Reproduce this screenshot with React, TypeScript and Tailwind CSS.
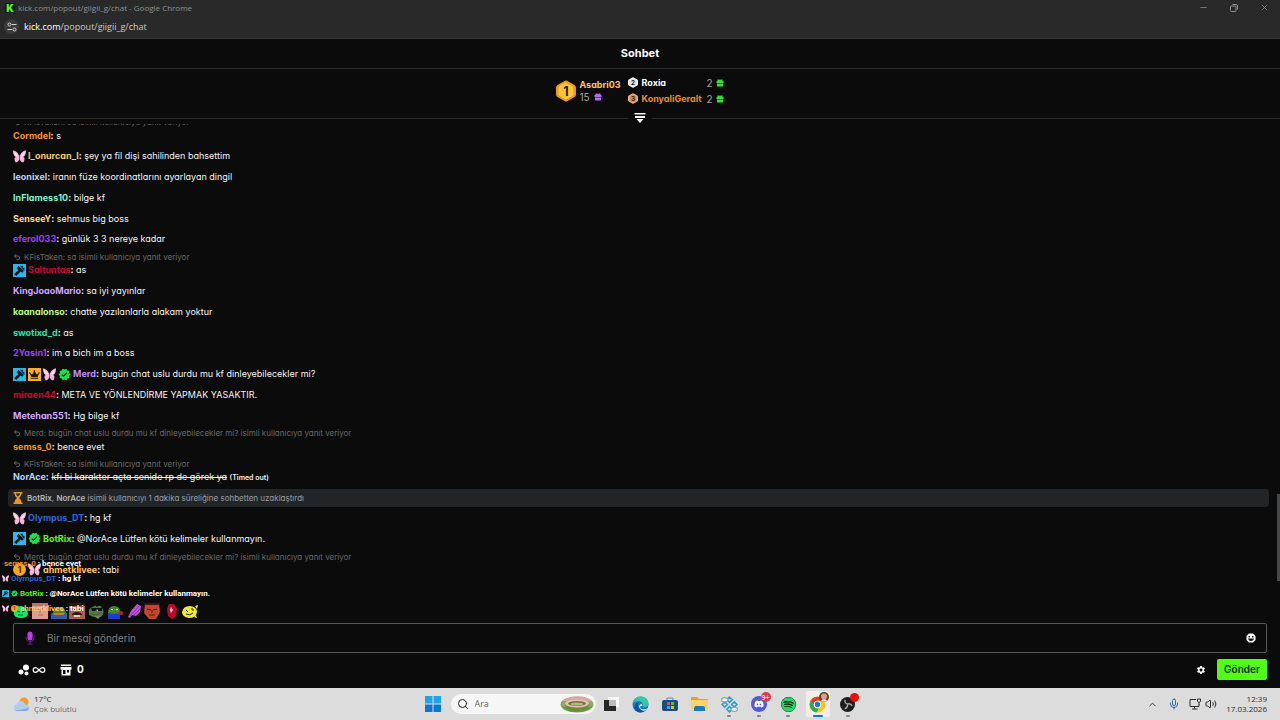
import type { ReactNode } from 'react';
import { ChevronUp, Infinity as InfinityIcon, Mic, Minus, Search, Undo2, Volume2, X } from 'lucide-react';
import { FaCrown, FaDiscord, FaSpotify } from 'react-icons/fa';
import { MdSettings, MdVerified } from 'react-icons/md';

type Badge = 'mod' | 'vip' | 'butterfly' | 'verified' | 'coin';

type Message = {
  user: string;
  color: string;
  text: string;
  badges?: Badge[];
  reply?: string;
  timedOut?: boolean;
  notice?: boolean;
};

const SA_REPLY = 'KFisTaken: sa isimli kullanıcıya yanıt veriyor';
const MERD_REPLY = 'Merd: bugün chat uslu durdu mu kf dinleyebilecekler mi? isimli kullanıcıya yanıt veriyor';

const messages: Message[] = [
  { user: 'Cormdel', color: 'text-[#f2941f]', text: 's', reply: SA_REPLY },
  { user: 'l_onurcan_l', color: 'text-[#ffc466]', text: 'şey ya fil dişi sahilinden bahsettim', badges: ['butterfly'] },
  { user: 'leonixel', color: 'text-[#b5d2fa]', text: 'iranın füze koordinatlarını ayarlayan dingil' },
  { user: 'InFlamess10', color: 'text-[#7df5d0]', text: 'bilge kf' },
  { user: 'SenseeY', color: 'text-[#ffd899]', text: 'sehmus big boss' },
  { user: 'eferol033', color: 'text-[#9146f0]', text: 'günlük 3 3 nereye kadar' },
  { user: 'Saltuntas', color: 'text-[#c40a34]', text: 'as', badges: ['mod'], reply: SA_REPLY },
  { user: 'KingJoaoMario', color: 'text-[#cfa5ff]', text: 'sa iyi yayınlar' },
  { user: 'kaanalonso', color: 'text-[#b4fb8e]', text: 'chatte yazılanlarla alakam yoktur' },
  { user: 'swotixd_d', color: 'text-[#2fe0a5]', text: 'as' },
  { user: '2Yasin1', color: 'text-[#9146f0]', text: 'im a bich im a boss' },
  { user: 'Merd', color: 'text-[#bd8cff]', text: 'bugün chat uslu durdu mu kf dinleyebilecekler mi?', badges: ['mod', 'vip', 'butterfly', 'verified'] },
  { user: 'miraen44', color: 'text-[#c40a34]', text: 'META VE YÖNLENDİRME YAPMAK YASAKTIR.' },
  { user: 'Metehan551', color: 'text-[#d2a6ff]', text: 'Hg bilge kf' },
  { user: 'semss_0', color: 'text-[#f2941f]', text: 'bence evet', reply: MERD_REPLY },
  { user: 'NorAce', color: 'text-[#b5d2fa]', text: 'kfı bi karakter açta senide rp de görek ya', reply: SA_REPLY, timedOut: true },
  { user: 'BotRix', color: '', text: '', notice: true },
  { user: 'Olympus_DT', color: 'text-[#2a68d8]', text: 'hg kf', badges: ['butterfly'] },
  { user: 'BotRix', color: 'text-[#53fc18]', text: '@NorAce Lütfen kötü kelimeler kullanmayın.', badges: ['mod', 'verified'] },
  { user: 'ahmetklivee', color: 'text-[#ffc466]', text: 'tabi', badges: ['coin', 'butterfly'], reply: MERD_REPLY },
];

const overlayMessages: Message[] = [
  { user: 'semss_0', color: 'text-[#f2941f]', text: 'bence evet' },
  { user: 'Olympus_DT', color: 'text-[#2a68d8]', text: 'hg kf', badges: ['butterfly'] },
  { user: 'BotRix', color: 'text-[#53fc18]', text: '@NorAce Lütfen kötü kelimeler kullanmayın.', badges: ['mod', 'verified'] },
  { user: 'ahmetklivee', color: 'text-[#ffc466]', text: 'tabi', badges: ['butterfly', 'coin'] },
];

function Butterfly({ className }: { className: string }) {
  return (
    <svg viewBox="0 0 24 24" className={className}>
      <path d="M12 13C10 5 5 1 0 1c0 5 1 10 5 12-3 1-3 6 0 10 4 0 7-4 7-9z" fill="#f7b6dc" />
      <path d="M12 13c2-8 7-12 12-12 0 5-1 10-5 12 3 1 3 6 0 10-4 0-7-4-7-9z" fill="#f7b6dc" />
      <path d="M9 11C7 7 5 5 2 4c1 4 2 6 5 8zM15 11c2-4 4-6 7-7-1 4-2 6-5 8z" fill="#fde8f5" />
      <path d="M12 9v10" stroke="#7c4a6b" strokeWidth="1" />
    </svg>
  );
}

function Gift({ className }: { className: string }) {
  return (
    <svg viewBox="0 0 16 16" className={className} fill="currentColor">
      <path d="M3 1h4l1 2 1-2h4v3h2v4H1V4h2zM2 9h12v6H2z" />
    </svg>
  );
}

function BadgeIcon({ kind, small }: { kind: Badge; small?: boolean }) {
  const size = small ? 'size-[7px] shrink-0' : 'size-[13px] shrink-0';
  if (kind === 'mod') {
    return (
      <svg viewBox="0 0 24 24" className={size}>
        <path d="M0 0h24v24H0z" fill="#2cb8ea" />
        <path d="M10 3l10 10-3 3-3-2-8 8-4-3 8-8-3-3z" fill="#07141b" />
        <path d="M13 3h5v4h3v6z" fill="#07141b" />
      </svg>
    );
  }
  if (kind === 'vip') {
    return <span className={`${size} flex items-center justify-center bg-[#fdb022] text-[#231500]`}><FaCrown className="size-5/6" /></span>;
  }
  if (kind === 'verified') return <MdVerified className={`${size} text-[#1fe04a]`} />;
  if (kind === 'butterfly') return <Butterfly className={size} />;
  return (
    <svg viewBox="0 0 24 24" className={size}>
      <circle cx="12" cy="12" r="12" fill="#f5a623" />
      <text x="12" y="18" textAnchor="middle" fontSize="17" fontWeight="700" fill="#5c3300">1</text>
    </svg>
  );
}

function Notice() {
  return (
    <li className="my-px flex h-[18px] shrink-0 items-center rounded-sm bg-[#222426] px-[5px] text-[8px] text-[#9a9ea3]">
      <svg viewBox="0 0 20 24" className="mr-1 h-3 w-[10px] shrink-0" fill="#e8952a">
        <path d="M1 0h18v3h-2c0 4-2 6-5 9 3 3 5 5 5 9h2v3H1v-3h2c0-4 2-6 5-9-3-3-5-5-5-9H1z" />
        <path d="M6 3h8c0 2-1 3-4 6-3-3-4-4-4-6z" fill="#222426" />
      </svg>
      <span className="whitespace-pre">
        <b className="font-semibold text-[#b4b7bb]">BotRix</b>, <b className="font-semibold text-[#b4b7bb]">NorAce</b> isimli kullanıcıyı 1 dakika süreliğine sohbetten uzaklaştırdı
      </span>
    </li>
  );
}

function ChatRow({ m }: { m: Message }) {
  if (m.notice) return <Notice />;
  return (
    <li className={`flex shrink-0 grow flex-col justify-center px-[5px] ${m.reply ? 'max-h-[31px] basis-[30px]' : 'max-h-[21px] basis-5'}`}>
      {m.reply && (
        <div className="flex h-[10px] items-center gap-[3px] pt-1 text-[#686868]">
          <Undo2 className="size-2 shrink-0" strokeWidth={3} />
          <span className="whitespace-nowrap text-[8px]">{m.reply}</span>
        </div>
      )}
      <div className="flex h-5 items-center gap-[2px]">
        {m.badges?.map((b) => <BadgeIcon key={b} kind={b} />)}
        <p className="whitespace-nowrap">
          <button className={`font-bold ${m.color}`}>{m.user}</button>
          <b>:</b>{' '}
          {m.timedOut ? <><s>{m.text}</s> <span className="text-[7px] font-semibold">(Timed out)</span></> : m.text}
        </p>
      </div>
    </li>
  );
}

function Hexagon({ n, fill, edge, className }: { n: string; fill: string; edge: string; className: string }) {
  return (
    <svg viewBox="0 0 40 44" className={className}>
      <path d="M17 2q3-2 6 0l14 8q3 2 3 5v14q0 3-3 5l-14 8q-3 2-6 0L3 34q-3-2-3-5V15q0-3 3-5z" fill={edge} />
      <path d="M18 6q2-1 4 0l11 6q2 2 2 4v12q0 2-2 4l-11 6q-2 1-4 0L7 32q-2-2-2-4V16q0-2 2-4z" fill={fill} />
      <text x="20" y="31" textAnchor="middle" fontSize="25" fontWeight="700" fill="#2a1a05">{n}</text>
    </svg>
  );
}

function Leaderboard() {
  return (
    <section className="relative flex h-[50px] shrink-0 items-center justify-center gap-[7px] border-b border-[#2b2b2b] pb-[6px] text-[10px]">
      <div className="flex items-center gap-[3px]">
        <Hexagon n="1" fill="#f8c53c" edge="#e89a1c" className="h-[22px] w-5" />
        <div className="leading-[13px]">
          <div className="text-[9px] font-bold text-[#ffc466]">Asabri03</div>
          <div className="flex items-center gap-1 text-[#a5a5a5]">15 <Gift className="size-2 text-[#b86af0]" /></div>
        </div>
      </div>
      <ul className="leading-4">
        <li className="flex items-center">
          <Hexagon n="2" fill="#dfe3e6" edge="#f5f5f5" className="mr-1 h-[11px] w-[10px]" />
          <span className="w-[65px] text-[9px] font-bold text-white">Roxia</span>
          <span className="w-[9px] text-[#a5a5a5]">2</span>
          <Gift className="size-2 text-[#2ee62e]" />
        </li>
        <li className="flex items-center">
          <Hexagon n="3" fill="#d98d5c" edge="#f0b48c" className="mr-1 h-[11px] w-[10px]" />
          <span className="w-[65px] text-[9px] font-bold text-[#e88a32]">KonyaliGeralt</span>
          <span className="w-[9px] text-[#a5a5a5]">2</span>
          <Gift className="size-2 text-[#2ee62e]" />
        </li>
      </ul>
      <button aria-label="Liderlik tablosu" className="absolute -bottom-[6px] left-1/2 -translate-x-1/2 bg-[#0b0b0b] px-[6px]">
        <svg viewBox="0 0 24 24" className="size-3" fill="#ffffff">
          <path d="M1 2h22v3H1zM2 8h20v4H2zM5 14h14l-7 8z" />
        </svg>
      </button>
    </section>
  );
}

function Emote({ label, children }: { label: string; children: ReactNode }) {
  return (
    <button aria-label={label} className="size-4">
      <svg viewBox="0 0 16 16" className="size-4">{children}</svg>
    </button>
  );
}

function FrogFace({ skin }: { skin: string }) {
  return (
    <>
      <path d="M1 10q-1-5 4-6 2-3 4 0 3-3 5 1 3 4 0 8-6 3-13-1z" fill={skin} />
      <path d="M4 6h3v2H4zM9 6h4v2H9z" fill="#e9efe0" />
      <path d="M5 6h2v2H5zM11 6h2v2h-2z" fill="#101810" />
      <path d="M3 11q5 2 10-1" stroke="#7c3f27" fill="none" />
    </>
  );
}

function QuickEmotes() {
  return (
    <div className="flex w-[185px] justify-between">
      <Emote label="slime">
        <path d="M1 9q1-6 7-6 6 1 7 7 0 5-7 5-8 0-7-6z" fill="#12e86a" />
        <path d="M4 8l3 1M9 9l3-1M5 12h5" stroke="#07602c" />
        <path d="M3 4l2-2 1 3z" fill="#12e86a" />
      </Emote>
      <Emote label="yuz">
        <path d="M0 0h16v16H0z" fill="#dc9d94" />
        <path d="M0 0h16v3H0z" fill="#b5736a" />
        <path d="M3 6h4M9 6h4M6 12h5M8 7v3" stroke="#b06d64" />
      </Emote>
      <Emote label="pepe">
        <path d="M0 10q8-2 16 0v6H0z" fill="#2a62a8" />
        <path d="M2 11q-1-6 5-7 7-1 8 6-5 4-13 1z" fill="#5d7a2f" />
        <path d="M4 7h3M10 7h3" stroke="#d6d6b8" />
        <path d="M3 11h10" stroke="#c97a2d" strokeWidth="2" />
      </Emote>
      <Emote label="biyik">
        <path d="M0 0h16v16H0z" fill="#a95e50" />
        <path d="M0 0h16v3H0zM3 11q5-4 10 0v1H3z" fill="#2c1915" />
        <path d="M3 6h4v2H3zM9 6h4v2H9z" fill="#5b2a22" />
        <path d="M5 12h6v2H5z" fill="#e8c5bb" />
      </Emote>
      <Emote label="cool">
        <FrogFace skin="#4c7c4a" />
        <path d="M3 5h11v3h-4L9 6 7 8H4z" fill="#101010" />
        <path d="M6 13h7l-3 3z" fill="#62936a" />
      </Emote>
      <Emote label="gul">
        <path d="M1 9h12v7H1z" fill="#183fd0" />
        <path d="M1 10q0-7 6-7 6 0 6 6-3 3-12 1z" fill="#3d8a32" />
        <path d="M4 6h2v1H4zM9 6h2v1H9z" fill="#f0f0e0" />
        <path d="M4 10h8" stroke="#a3452b" />
        <circle cx="14" cy="10" r="2" fill="#d31919" />
      </Emote>
      <Emote label="mor">
        <path d="M2 14l3-6 6-7 4 2-1 6-4 4-4-1-2 3z" fill="#c450df" />
        <path d="M5 12l8-9M8 12l6-6M3 11l2 3" stroke="#8a2fab" />
      </Emote>
      <Emote label="kirmizi">
        <path d="M1 0h14l1 9-4 7H5L0 10z" fill="#c5452f" />
        <path d="M1 0h14v2H1z" fill="#47140e" />
        <path d="M3 6l4 1M9 7l4-1M5 12h6M8 7v3" stroke="#5a170e" />
      </Emote>
      <Emote label="yakut">
        <path d="M6 1h5l3 5-1 7-4 3-4-3-1-7z" fill="#c0082c" />
        <path d="M8 4l2 3-2 3-1-3z" fill="#ffd6df" />
      </Emote>
      <Emote label="sari">
        <path d="M0 9q1-6 8-6 7 1 7 6-1 6-8 6-7-1-7-6z" fill="#ecec2b" />
        <path d="M4 7l2 2M9 6h2v2M4 11q4 2 7-1" stroke="#252500" fill="none" />
        <path d="M13 3l3-1-1 4zM12 14l3 1-1-3z" fill="#ece96a" />
      </Emote>
    </div>
  );
}

function ChatOverlay() {
  return (
    <ul className="pointer-events-none absolute -top-[25px] left-0 z-10 px-[2px] font-['Roboto',sans-serif] text-[8px] leading-[15px] font-bold text-white">
      {overlayMessages.map((m) => (
        <li key={m.user} className="flex items-center gap-[2px] whitespace-nowrap">
          {m.badges?.map((b) => <BadgeIcon key={b} kind={b} small />)}
          <span className={m.badges ? '' : 'pl-[2px]'}>
            <span className={`font-semibold ${m.color}`}>{m.user}</span> : {m.text}
          </span>
        </li>
      ))}
    </ul>
  );
}

function Composer() {
  return (
    <footer className="relative shrink-0 px-[13px] pt-[22px]">
      <ChatOverlay />
      <QuickEmotes />
      <div className="mt-1 flex h-[30px] items-center rounded-xs border border-[#555] pr-[10px] pl-[11px]">
        <svg viewBox="0 0 20 28" className="h-[14px] w-[10px] shrink-0">
          <rect x="5" y="1" width="10" height="18" rx="5" fill="#c03ce8" />
          <path d="M2 12v3q1 6 8 6t8-6v-3M10 21v5M5 26h10" stroke="#7a1ba5" strokeWidth="2" fill="none" />
        </svg>
        <input aria-label="Bir mesaj gönderin" placeholder="Bir mesaj gönderin" className="ml-3 min-w-0 flex-1 bg-transparent text-[10px] text-white outline-none placeholder:text-[#808080]" />
        <button aria-label="Emoji">
          <svg viewBox="0 0 20 20" className="size-[10px]">
            <path d="M6 1h8l5 5v8l-5 5H6l-5-5V6z" fill="#fff" />
            <path d="M5 6h3v3H5zM12 6h3v3h-3zM4 11h12q-1 5-6 5t-6-5z" fill="#111" />
          </svg>
        </button>
      </div>
      <div className="mb-[2px] flex h-[33px] items-center text-white">
        <button aria-label="Sohbet kimliği" className="ml-[5px] flex items-center gap-[2px]">
          <svg viewBox="0 0 24 24" className="size-3" fill="currentColor">
            <circle cx="16" cy="7" r="6" /><circle cx="6" cy="16" r="5" /><circle cx="17" cy="19" r="4" />
          </svg>
          <InfinityIcon className="size-[14px]" strokeWidth={2} />
        </button>
        <button className="ml-[14px] flex items-center gap-[5px] text-[10px] font-bold">
          <svg viewBox="0 0 24 24" className="size-3" fill="currentColor">
            <path d="M2 1h20v3H2zM1 6h22v5h-2v12H3V11H1zM6 12v8h5v-8zM14 12v5h4v-5z" fillRule="evenodd" />
          </svg>
          0
        </button>
        <button aria-label="Ayarlar" className="ml-auto"><MdSettings className="size-[10px]" /></button>
        <button className="ml-[11px] h-[21px] w-[50px] rounded-xs bg-[#53fc18] text-[10px] font-semibold text-[#0c2a06]">Gönder</button>
      </div>
    </footer>
  );
}

function BrowserBar() {
  return (
    <header className="shrink-0 border-b border-[#373737] bg-[#292929] font-['Open_Sans',sans-serif] text-[9px]">
      <div className="flex h-[15px] items-center pr-[11px] pl-[5px] text-[#919191]">
        <span className="flex size-[10px] items-center justify-center bg-[#061a04] font-['Inter',sans-serif] text-[10px] leading-none font-black text-[#53fc18]">K</span>
        <h1 className="ml-[3px] text-[8px]">kick.com/popout/giigii_g/chat - Google Chrome</h1>
        <div className="ml-auto flex items-center gap-[22px]">
          <button aria-label="Küçült"><Minus className="size-[9px]" /></button>
          <button aria-label="Geri yükle">
            <svg viewBox="0 0 16 16" className="size-2" fill="none" stroke="currentColor" strokeWidth="2">
              <rect x="1" y="4" width="11" height="11" rx="2" /><path d="M5 1h7q3 0 3 3v7" />
            </svg>
          </button>
          <button aria-label="Kapat"><X className="size-[9px]" /></button>
        </div>
      </div>
      <div className="flex h-[23px] items-center gap-[5px] pl-1 text-[#c9c9c9]">
        <button aria-label="Site bilgileri" className="flex size-[15px] items-center justify-center rounded-full bg-[#3b3b3b]">
          <svg viewBox="0 0 20 20" className="size-[10px]" fill="none" stroke="#d4d4d4" strokeWidth="2">
            <circle cx="5" cy="5" r="3" /><path d="M10 5h9M1 15h9" /><circle cx="15" cy="15" r="3" />
          </svg>
        </button>
        <span><span className="text-white">kick.com</span>/popout/giigii_g/chat</span>
      </div>
    </header>
  );
}

function TaskButton({ label, running, active, children }: { label: string; running?: boolean; active?: boolean; children: ReactNode }) {
  return (
    <button aria-label={label} className={`relative flex h-[26px] w-6 items-center justify-center rounded-xs ${active ? 'bg-[#f0eeeb]' : ''}`}>
      {children}
      {running && <span className="absolute bottom-0 left-1/2 h-[2px] w-1 -translate-x-1/2 rounded-full bg-[#858585]" />}
      {active && <span className="absolute bottom-0 left-1/2 h-[2px] w-[10px] -translate-x-1/2 rounded-full bg-[#1474c4]" />}
    </button>
  );
}

function Taskbar() {
  return (
    <nav className="flex h-8 shrink-0 items-center bg-[#dcdcdc] px-[13px] font-['Open_Sans',sans-serif] text-[8px] leading-[10px] text-[#2b2b2b]">
      <div className="flex flex-1 items-center gap-1">
        <svg viewBox="0 0 34 30" className="h-[15px] w-[17px]">
          <circle cx="22" cy="10" r="9" fill="#f49a2c" />
          <path d="M3 26q-4-5 1-10 3-1 4-1 2-8 9-7 6 1 7 7 8 0 9 6 0 6-7 7H8q-3 0-5-2z" fill="#b2cdf5" />
          <path d="M3 26q9 2 29-5-1 6-6 7H8q-3 0-5-2z" fill="#7ea8e8" />
        </svg>
        <div>
          <div>17°C</div>
          <div className="text-[#6a6a6a]">Çok bulutlu</div>
        </div>
      </div>

      <div className="flex items-center">
        <TaskButton label="Başlat">
          <svg viewBox="0 0 32 32" className="size-4">
            <path d="M0 0h15v15H0zM17 0h15v15H17z" fill="#20a4e8" />
            <path d="M0 17h15v15H0zM17 17h15v15H17z" fill="#0b78cf" />
          </svg>
        </TaskButton>
        <label className="mr-[3px] ml-[6px] flex h-5 w-[145px] items-center gap-[6px] rounded-full bg-[#f6f6f6] pr-[2px] pl-[6px]">
          <Search className="size-3 shrink-0 text-[#222]" strokeWidth={2} />
          <input aria-label="Ara" placeholder="Ara" className="min-w-0 flex-1 bg-transparent text-[9px] outline-none placeholder:text-[#666]" />
          <svg viewBox="0 0 68 34" className="h-[17px] w-[34px] shrink-0">
            <ellipse cx="34" cy="17" rx="33" ry="16" fill="#88aa63" />
            <path d="M4 10Q20 0 36 1q20 0 28 10z" fill="#dca3a8" />
            <path d="M2 21q14 12 30 11 22 0 33-11-26 6-63 0z" fill="#5c9a35" />
            <ellipse cx="34" cy="18" rx="24" ry="9" fill="#887654" />
            <ellipse cx="34" cy="15" rx="24" ry="8" fill="#d8cda9" />
            <ellipse cx="34" cy="15" rx="18" ry="5" fill="#7b6c50" />
            <ellipse cx="34" cy="16" rx="13" ry="3" fill="#a8bf78" />
          </svg>
        </label>
        <div className="flex w-[261px] justify-between">
          <TaskButton label="Görev görünümü">
            <svg viewBox="0 0 16 16" className="size-4"><path d="M5 1h11v10H5z" fill="#f8f8f8" /><path d="M1 4h5v6h7v5H1z" fill="#262626" /><path d="M6 4h7v6H6z" fill="#bbb" /></svg>
          </TaskButton>
          <TaskButton label="Edge">
            <svg viewBox="0 0 32 32" className="size-[17px]">
              <circle cx="16" cy="16" r="15" fill="#1679c9" />
              <path d="M1 15C2 6 9 1 17 1c9 0 15 7 14 14-1 6-8 7-12 4 2-3 1-8-5-9C8 9 3 11 1 15z" fill="#39c8a0" />
              <path d="M1 15C2 7 10 4 16 6c-7-1-9 3-12 5-2 2-3 4-3 4z" fill="#25a8dc" />
              <path d="M11 16c-1 8 6 12 15 10-6 8-18 6-21-2-2-7 4-12 9-13-2 1-3 3-3 5z" fill="#0d529d" />
              <path d="M19 19q-3-1-4 1 0 5 8 5 3 0 6-2l-3 4q-7 2-11-3-4-6 2-9 3 1 2 4z" fill="#e8f4fb" />
            </svg>
          </TaskButton>
          <TaskButton label="Microsoft Store">
            <svg viewBox="0 0 16 16" className="size-4">
              <path d="M5 4V2h6v2" stroke="#2fa1e4" fill="none" strokeWidth="1" /><rect y="4" width="16" height="11" rx="2" fill="#164d86" />
              <path d="M5 6h3v3H5z" fill="#f25022" /><path d="M9 6h3v3H9z" fill="#7fba00" /><path d="M5 10h3v3H5z" fill="#29a8ee" /><path d="M9 10h3v3H9z" fill="#ffb900" />
            </svg>
          </TaskButton>
          <TaskButton label="Dosya Gezgini">
            <svg viewBox="0 0 17 16" className="h-4 w-[17px]">
              <path d="M0 2q0-1 1-1h5l2 2h8q1 0 1 1v10H0z" fill="#e5a21c" /><rect y="4" width="17" height="11" rx="1" fill="#fcd462" /><path d="M3 15v-3q0-2 2-2h7q2 0 2 2v3z" fill="#1b7ac4" />
            </svg>
          </TaskButton>
          <TaskButton label="Uygulama" running>
            <svg viewBox="0 0 32 32" className="size-[17px]" fill="none" stroke="#2c9fc8" strokeWidth="3">
              <path d="M11 7l5-5 5 5-5 5zM11 25l5-5 5 5-5 5zM2 16l5-5 5 5-5 5zM20 16l5-5 5 5-5 5z" />
              <ellipse cx="7" cy="7" rx="6" ry="4" fill="#e8f1f5" stroke="#8aa1ae" strokeWidth="2" /><ellipse cx="25" cy="25" rx="6" ry="4" fill="#e8f1f5" stroke="#8aa1ae" strokeWidth="2" />
            </svg>
          </TaskButton>
          <TaskButton label="Discord" running>
            <span className="flex size-4 items-center justify-center rounded-full bg-[#5558d9] text-white"><FaDiscord className="size-[10px]" /></span>
            <span className="absolute top-px right-0 flex size-[10px] items-center justify-center rounded-full bg-[#d63c4b] text-[7px] leading-none text-white">9+</span>
          </TaskButton>
          <TaskButton label="Spotify" running><FaSpotify className="size-[15px] rounded-full bg-[#0a1c10] text-[#1ed760]" /></TaskButton>
          <TaskButton label="Chrome" active>
            <svg viewBox="0 0 32 32" className="size-[17px]">
              <circle cx="16" cy="16" r="15" fill="#fbc116" />
              <path d="M3 9A15 15 0 0 1 29 9H16a7 7 0 0 0-6 11z" fill="#e33b2e" />
              <path d="M3 9l7 11a7 7 0 0 0 9 2l-5 9A15 15 0 0 1 3 9z" fill="#2da94f" />
              <circle cx="16" cy="16" r="7" fill="#fff" /><circle cx="16" cy="16" r="5" fill="#2374e1" />
            </svg>
            <svg viewBox="0 0 20 20" className="absolute top-px right-px size-[10px]">
              <circle cx="10" cy="10" r="10" fill="#6b3c2c" /><circle cx="10" cy="9" r="6" fill="#d9a288" /><path d="M4 17q6-5 12 0-6 5-12 0z" fill="#eee" />
            </svg>
          </TaskButton>
          <TaskButton label="OBS Studio" running>
            <svg viewBox="0 0 32 32" className="size-[15px]">
              <circle cx="16" cy="16" r="16" fill="#1d1d1f" />
              <path d="M16 15q-7-2-5-9M16 15q7-2 10 4M16 15q1 8-6 10" stroke="#a9a9a9" strokeWidth="3" fill="none" />
            </svg>
            <span className="absolute top-[2px] right-px size-[9px] rounded-full bg-[#ee0d0d]" />
          </TaskButton>
        </div>
      </div>

      <div className="flex flex-1 items-center justify-end">
        <button aria-label="Gizli simgeler"><ChevronUp className="size-[11px]" /></button>
        <button aria-label="Mikrofon" className="ml-[10px] text-[#38679a]"><Mic className="size-3" /></button>
        <button aria-label="Ağ" className="ml-[9px]">
          <svg viewBox="0 0 24 24" className="size-3" fill="none" stroke="currentColor" strokeWidth="2">
            <path d="M14 3H2v14h18v-5M11 17v4M6 22h11M17 2h6v5q-3 4-6 0zM20 9v4" />
          </svg>
        </button>
        <button aria-label="Ses" className="ml-1"><Volume2 className="size-3" strokeWidth={2} /></button>
        <div className="ml-[9px] text-right">
          <div>12:39</div>
          <div>17.03.2026</div>
        </div>
      </div>
    </nav>
  );
}

export default function App() {
  return (
    <div className="flex h-screen flex-col overflow-hidden bg-[#0b0b0b] font-['Inter',sans-serif] text-[9px] text-[#f2f2f2] [font-feature-settings:'cv11']">
      <BrowserBar />
      <h2 className="flex h-[30px] shrink-0 items-center justify-center border-b border-[#2b2b2b] text-[11px] font-bold text-white">Sohbet</h2>
      <Leaderboard />
      <main className="relative mt-[5px] flex min-h-0 flex-1 flex-col overflow-hidden">
        <ul className="-mt-[9px] flex flex-1 flex-col justify-end pr-[11px] pb-px pl-2">
          {messages.map((m, i) => <ChatRow key={i} m={m} />)}
        </ul>
        <div className="absolute right-0 bottom-0 h-[87px] w-[3px] bg-[#484848]" />
      </main>
      <Composer />
      <Taskbar />
    </div>
  );
}
